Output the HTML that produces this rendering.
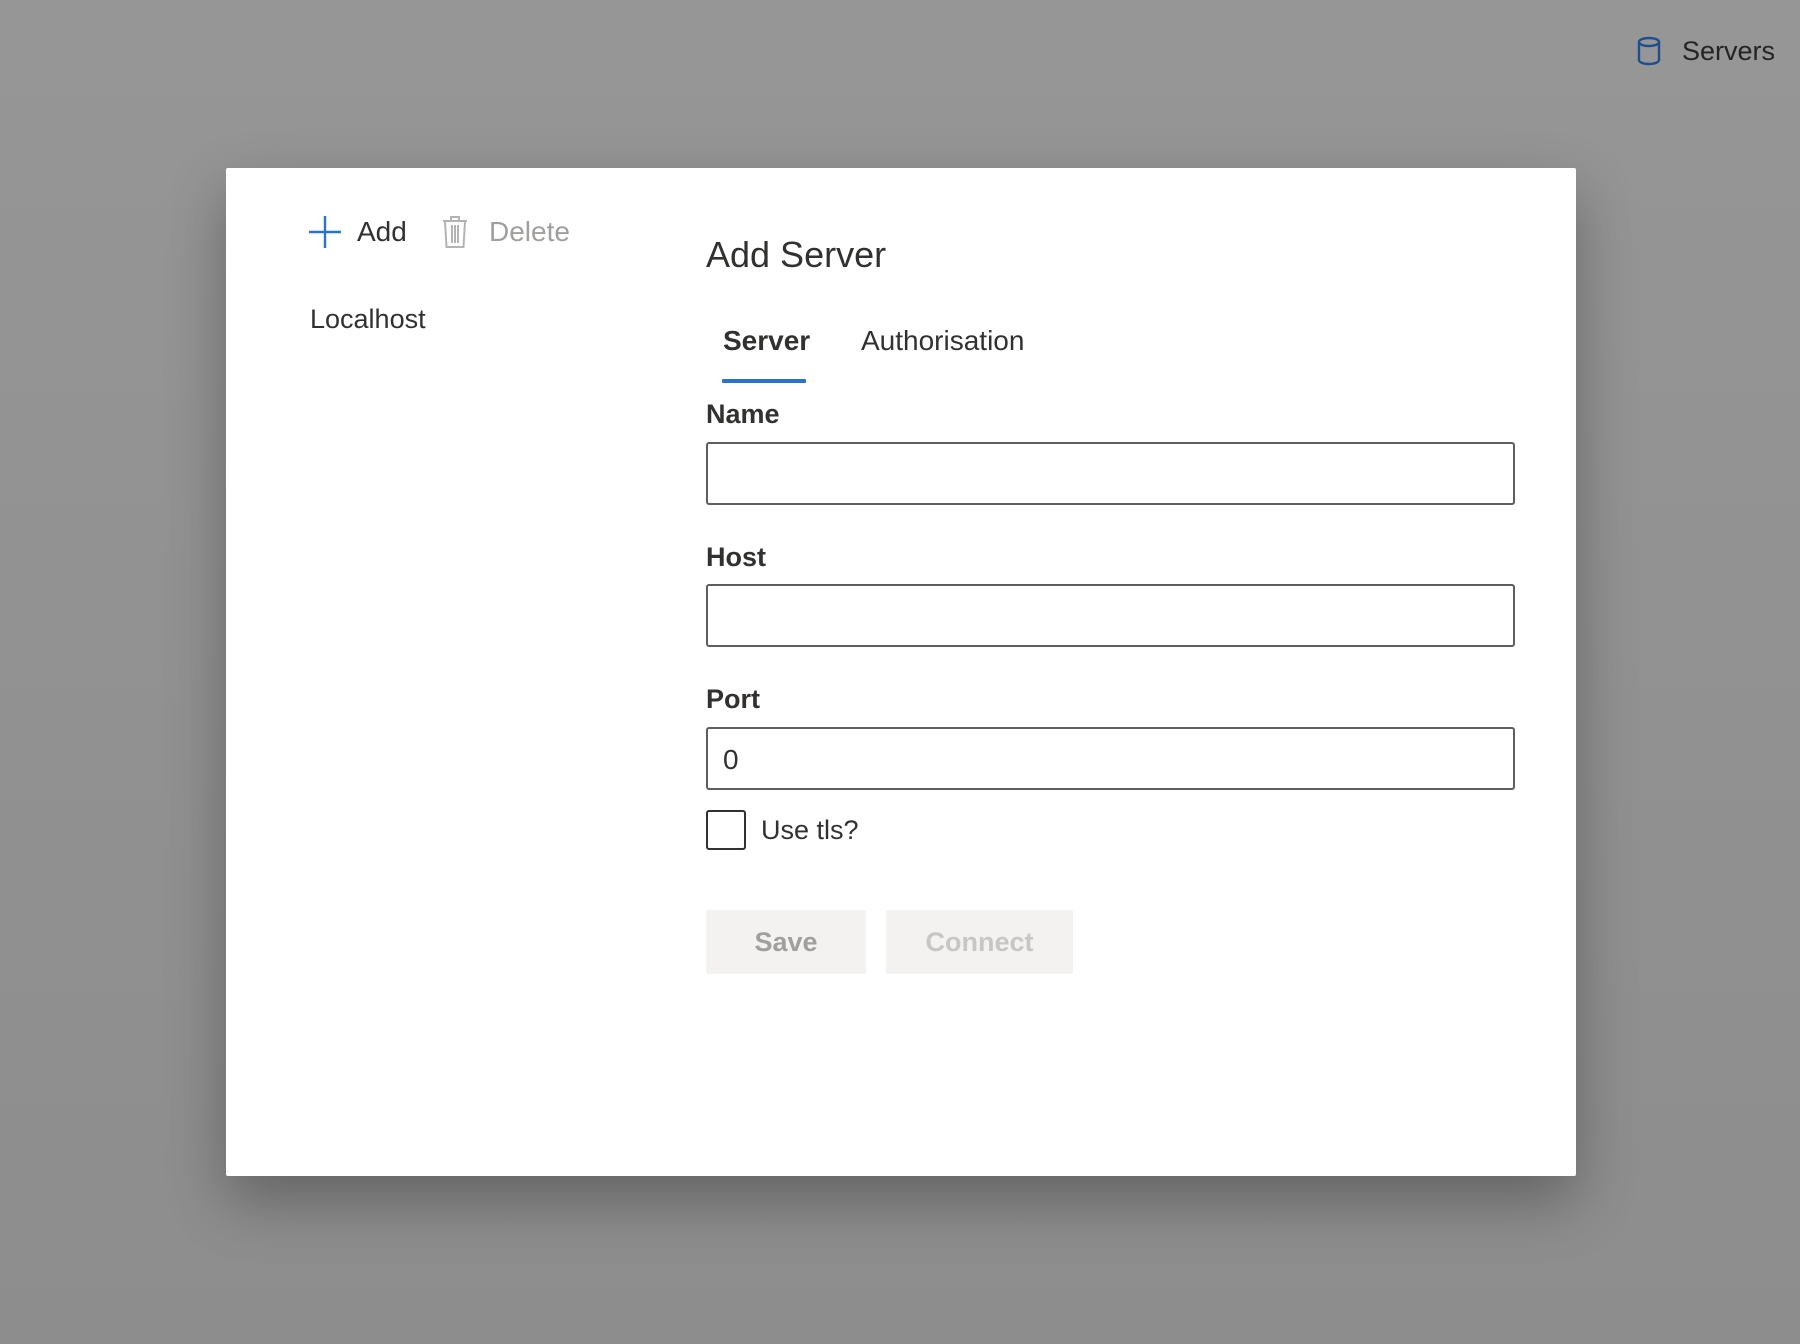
<!DOCTYPE html>
<html><head><meta charset="utf-8"><style>
*{margin:0;padding:0;box-sizing:border-box}
body{width:1800px;height:1344px;background:linear-gradient(#969696,#8d8d8d);font-family:"Liberation Sans",sans-serif;color:#323130;position:relative;overflow:hidden}
.a{position:absolute;white-space:nowrap;line-height:1}
.dlg{position:absolute;left:226px;top:168px;width:1350px;height:1008px;background:#fff;border-radius:2px;box-shadow:0 25px 60px rgba(0,0,0,.3)}
.inp{position:absolute;left:706px;width:809px;height:63px;border:2px solid #605e5c;border-radius:3px;background:#fff}
.lbl{font-weight:bold;font-size:27px}
.btn{position:absolute;top:910px;height:64px;background:#f3f2f1;border-radius:2px;color:#a19f9d;font-size:27px;font-weight:bold;display:flex;align-items:center;justify-content:center}
</style></head><body>
<svg class="a" style="left:1636px;top:36px" width="26" height="30" viewBox="0 0 26 30"><ellipse cx="13" cy="6" rx="10" ry="4" fill="none" stroke="#1f4e8c" stroke-width="2.4"/><path d="M3 6v18c0 2.2 4.5 4 10 4s10-1.8 10-4V6" fill="none" stroke="#1f4e8c" stroke-width="2.4"/></svg>
<div class="a" style="left:1682px;top:38px;font-size:27px;color:#252423">Servers</div>
<div class="dlg"></div>
<svg class="a" style="left:309px;top:216px" width="32" height="32"><path d="M16 0v32M0 16h32" stroke="#2b72cc" stroke-width="2.4"/></svg>
<div class="a" style="left:357px;top:218px;font-size:28px">Add</div>
<svg class="a" style="left:442px;top:215px" width="26" height="34" viewBox="0 0 26 34"><path d="M1 6h24M9 6V2h8v4M3 6l1.5 26h17L23 6M10 10v18M13 10v18M16 10v18" fill="none" stroke="#b5b3b1" stroke-width="2"/></svg>
<div class="a" style="left:489px;top:218px;font-size:28px;color:#a19f9d">Delete</div>
<div class="a" style="left:310px;top:306px;font-size:27px">Localhost</div>
<div class="a" style="left:706px;top:237px;font-size:36px">Add Server</div>
<div class="a" style="left:723px;top:327px;font-size:28px;font-weight:bold">Server</div>
<div class="a" style="left:861px;top:327px;font-size:28px">Authorisation</div>
<div class="a" style="left:722px;top:379px;width:84px;height:4px;background:#2b72cc;border-radius:1px"></div>
<div class="a lbl" style="left:706px;top:401px">Name</div>
<div class="inp" style="top:442px"></div>
<div class="a lbl" style="left:706px;top:544px">Host</div>
<div class="inp" style="top:584px"></div>
<div class="a lbl" style="left:706px;top:686px">Port</div>
<div class="inp" style="top:727px"></div>
<div class="a" style="left:723px;top:746px;font-size:28px">0</div>
<div class="a" style="left:706px;top:810px;width:40px;height:40px;border:2px solid #323130;border-radius:3px"></div>
<div class="a" style="left:761px;top:817px;font-size:27px">Use tls?</div>
<div class="btn" style="left:706px;width:160px">Save</div>
<div class="btn" style="left:886px;width:187px;color:#c8c6c4">Connect</div>
</body></html>
